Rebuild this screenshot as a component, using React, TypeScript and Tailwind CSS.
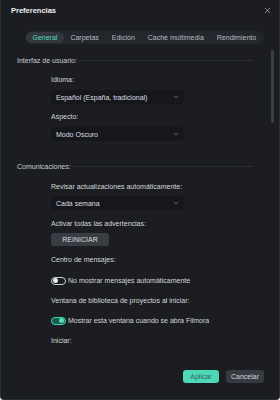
import { ChevronDown, X } from "lucide-react";

const tabs = ["General", "Carpetas", "Edición", "Caché multimedia", "Rendimiento"];

function Section({ title }: { title: string }) {
  return (
    <div className="flex h-[8px] items-center gap-[2px] pl-4 pr-[26px]">
      <span className="whitespace-nowrap text-[#c9ccd1]">{title}</span>
      <div className="h-px flex-1 bg-[#2a2d33]" />
    </div>
  );
}

function Label({ text, mt }: { text: string; mt: string }) {
  return <span className={`${mt} block h-[8px] leading-[8px]`}>{text}</span>;
}

function Select({ value, mt }: { value: string; mt: string }) {
  return (
    <div className={`${mt} flex h-[14px] w-[133px] items-center justify-between rounded-[3px] bg-[#15171a] pl-[5px] pr-[4px] text-[#dcdfe3]`}>
      <span>{value}</span>
      <ChevronDown size={8} strokeWidth={1.6} className="text-[#a9adb3]" />
    </div>
  );
}

function Toggle({ on }: { on: boolean }) {
  return (
    <div
      className={
        on
          ? "flex h-[8px] w-[15px] items-center justify-end rounded-full border border-[#3fd6b3] bg-[#1f5a4d] pr-[1px]"
          : "flex h-[8px] w-[15px] items-center justify-start rounded-full border border-[#c8ccd1] pl-[1px]"
      }
    >
      <div className={on ? "h-[5px] w-[5px] rounded-full bg-[#4fe0bd]" : "h-[5px] w-[5px] rounded-full bg-[#e6e8ea]"} />
    </div>
  );
}

export default function App() {
  return (
    <div
      className="flex h-[400px] w-[280px] flex-col rounded-b-[4px] border-x border-b border-[#2b2e34] bg-[#1b1d21] text-[7px] leading-none text-[#d4d7db]"
      style={{ fontFamily: '"Liberation Sans", Arial, sans-serif' }}
    >
      <div className="flex h-[21px] items-center justify-between pl-[10px] pr-[7px]">
        <span className="text-[7.5px] font-bold text-[#eef0f2]">Preferencias</span>
        <X size={9} strokeWidth={1.5} className="text-[#d9dcdf]" />
      </div>

      <div className="mt-[10px] flex pl-[24px]">
        <div className="flex h-[13px] items-center rounded-full bg-[#23262b] px-[1px]">
          {tabs.map((t, i) => (
            <span
              key={t}
              className={
                i === 0
                  ? "flex h-[11px] items-center rounded-full bg-[#33373d] px-[6.5px] text-[#4fdcb9]"
                  : "flex h-[11px] items-center px-[6.5px] text-[#b7bbc1]"
              }
            >
              {t}
            </span>
          ))}
        </div>
      </div>

      <div className="relative flex-1">
        <div className="absolute right-[5px] top-[6px] h-[73px] w-[3px] rounded-full bg-[#3a3e45]" />
        <div className="flex flex-col pt-[12px]">
          <Section title="Interfaz de usuario:" />
          <div className="flex flex-col pl-[50px]">
            <Label mt="mt-[12px]" text="Idioma:" />
            <Select mt="mt-[6px]" value="Español (España, tradicional)" />
            <Label mt="mt-[9px]" text="Aspecto:" />
            <Select mt="mt-[6px]" value="Modo Oscuro" />
          </div>

          <div className="mt-[21px]">
            <Section title="Comunicaciones:" />
          </div>
          <div className="flex flex-col pl-[50px]">
            <Label mt="mt-[13px]" text="Revisar actualizaciones automáticamente:" />
            <Select mt="mt-[5px]" value="Cada semana" />
            <Label mt="mt-[10px]" text="Activar todas las advertencias:" />
            <div className="mt-[5px] flex h-[13px] w-[58px] items-center justify-center rounded-[3px] bg-[#383c43] text-[#d9dcdf]">
              REINICIAR
            </div>
            <Label mt="mt-[10px]" text="Centro de mensajes:" />
            <div className="mt-[12px] flex h-[9px] items-center gap-[2px]">
              <Toggle on={false} />
              <span>No mostrar mensajes automáticamente</span>
            </div>
            <Label mt="mt-[12px]" text="Ventana de biblioteca de proyectos al iniciar:" />
            <div className="mt-[11px] flex h-[9px] items-center gap-[2px]">
              <Toggle on={true} />
              <span>Mostrar esta ventana cuando se abra Filmora</span>
            </div>
            <Label mt="mt-[12px]" text="Iniciar:" />
          </div>
        </div>
      </div>

      <div className="flex justify-end gap-[7px] pb-[16px] pr-[15px]">
        <div className="flex h-[13px] w-[36px] items-center justify-center rounded-[3px] bg-[#4fd8b7] text-[#2d6b5d]">
          Aplicar
        </div>
        <div className="flex h-[13px] w-[38px] items-center justify-center rounded-[3px] bg-[#363a41] text-[#d4d7db]">
          Cancelar
        </div>
      </div>
    </div>
  );
}
